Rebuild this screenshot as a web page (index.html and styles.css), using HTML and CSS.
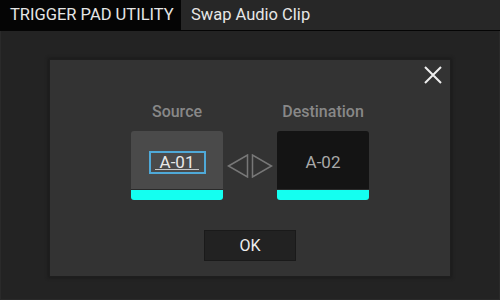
FILE: index.html
```html
<!doctype html>
<html lang="en">
<head>
<meta charset="utf-8">
<title>Swap Audio Clip</title>
<link rel="stylesheet" href="styles.css">
</head>
<body>

	<header class="topbar">
		<div class="topbar-tab">TRIGGER PAD UTILITY</div>
		<div class="topbar-title">Swap Audio Clip</div>
	</header>

	<main class="screen">

		<div class="dialog">

			<button class="dialog-close" title="Close">
				<svg width="18" height="18" viewBox="0 0 18 18"><path d="M1 1 L17 17 M17 1 L1 17" stroke="#eee" stroke-width="2" fill="none"/></svg>
			</button>

			<div class="swap">
				<div class="swap-label">Source</div>
				<div></div>
				<div class="swap-label">Destination</div>

				<div class="pad pad-source">
					<div class="pad-face"><span class="pad-edit"><span class="pad-edit-text">A-01</span></span></div>
				</div>

				<svg class="swap-arrows" width="46" height="24" viewBox="0 0 46 24">
					<path d="M1.5 12 L20.5 1 L20.5 23 Z M25.5 1 L25.5 23 L44.5 12 Z" stroke="#777" stroke-width="1.5" fill="none" stroke-linejoin="miter"/>
				</svg>

				<div class="pad pad-dest">
					<div class="pad-face"><span class="pad-name">A-02</span></div>
				</div>
			</div>

			<div class="dialog-actions">
				<button class="btn-ok">OK</button>
			</div>

		</div>

	</main>

</body>
</html>
```

FILE: styles.css
```css
* { box-sizing: border-box; }

html, body { height: 100%; }

body { margin: 0; background: #232323; color: #ddd; font-family: Roboto, "Liberation Sans", sans-serif; overflow: hidden; }

button { font: inherit; cursor: pointer; }

.topbar { display: flex; height: 31px; background: #272727; border-bottom: 1px solid #050505; font-size: 16.5px; }
.topbar-tab { width: 181px; background: #050505; color: #e6e6e6; padding: 5px 0 0 10px; }
.topbar-title { color: #e6e6e6; padding: 5px 0 0 10px; }

.screen { height: 269px; border: 1px solid #2a2a2a; border-top: none; padding: 28px 0 0 48px; }

.dialog { position: relative; width: 402px; height: 218px; background: #333; border: 1px solid #1e1e1e;
	box-shadow: 0 0 3px 1px #1a1a1a; padding-top: 43px; }

.dialog-close { position: absolute; top: 6px; right: 8px; width: 18px; height: 18px; padding: 0; border: none; background: none; display: flex; }

.swap { display: grid; grid-template-columns: 92px 46px 92px; column-gap: 4px; row-gap: 10px; justify-content: center; }

.swap-label { text-align: center; font-size: 16px; font-weight: 500; color: #888; line-height: 18px; }

.pad { height: 69px; border-radius: 3px; overflow: hidden; border-bottom: 10px solid #14fff0; }
.pad-source { background: #4a4a4a; }
.pad-dest { background: #141414; }

.pad-face { height: 100%; display: flex; align-items: center; justify-content: center; padding-top: 4px; border-bottom: 1px solid #2a2a2a; }

.pad-edit { display: flex; justify-content: center; width: 57px; height: 23px; border: 2px solid #4fa9d8; font-size: 17px; line-height: 18px; color: #e8e8e8; }
.pad-edit-text { padding: 0 5px; border-bottom: 1px solid #c8c8c8; height: 17px; }

.pad-name { font-size: 17px; color: #a8a8a8; }

.swap-arrows { align-self: center; }

.dialog-actions { display: flex; justify-content: center; margin-top: 30px; }

.btn-ok { width: 92px; height: 31px; background: #222; border: 1px solid #1a1a1a; color: #eee; font-size: 16px; padding: 0; }
```
